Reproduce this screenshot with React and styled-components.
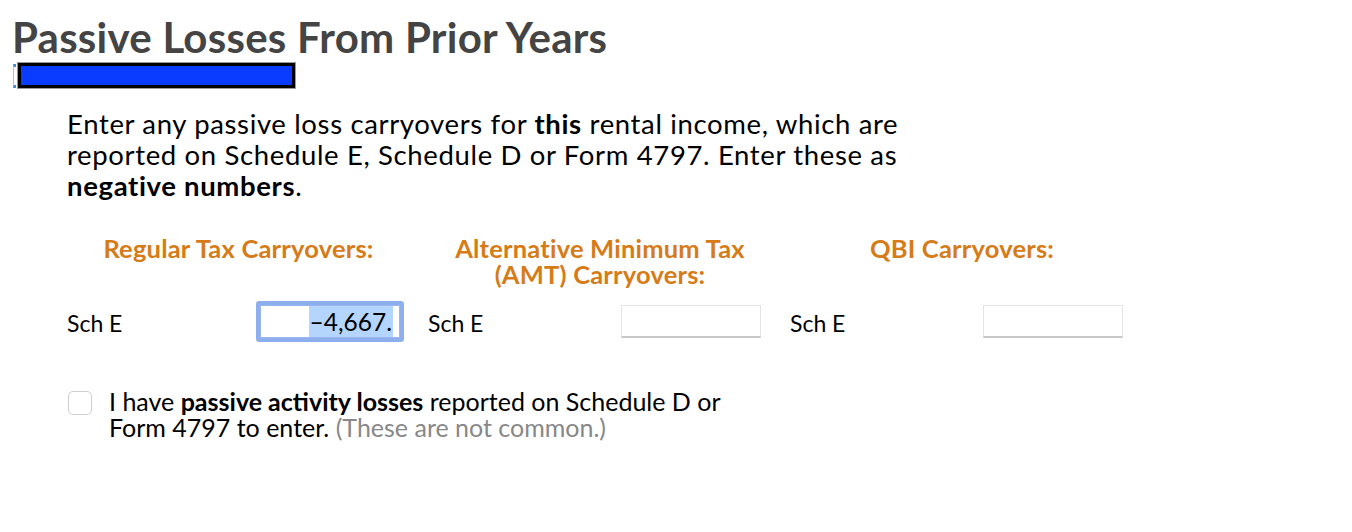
import React from 'react';
import styled, { createGlobalStyle } from 'styled-components';

const GlobalStyle = createGlobalStyle`
  body {
    margin: 0;
    background: #fff;
    font-family: Lato, "Liberation Sans", sans-serif;
    color: #000;
  }
`;

const Page = styled.div`
  padding: 15px 0 40px 12px;
`;

const Title = styled.h1`
  margin: 0;
  font-size: 42px;
  line-height: 44px;
  font-weight: 700;
  color: #444;
  letter-spacing: 0.25px;
`;

const Masked = styled.div`
  display: flex;
  align-items: center;
  gap: 2px;
  margin-top: 4px;
  margin-left: 1px;
`;

const Caret = styled.span`
  width: 2px;
  height: 18px;
  border-left: 1px solid #9cc3ea;
  border-top: 3px solid #3d8fd8;
  border-bottom: 3px solid #3d8fd8;
`;

const Bar = styled.div`
  width: 271px;
  height: 19px;
  background: #0a3cff;
  border: 3px solid #000;
  box-shadow: 0 0 0 1px #999;
`;

const Body = styled.div`
  padding-left: 55px;
`;

const Intro = styled.p`
  margin: 20px 0 0;
  max-width: 860px;
  font-size: 27.5px;
  line-height: 31px;
  letter-spacing: 0.65px;
`;

const Columns = styled.div`
  display: grid;
  grid-template-columns: 361px 362px 362px;
  margin-top: 34px;
`;

const Heading = styled.div`
  padding-right: 18px;
  text-align: center;
  font-size: 25.5px;
  line-height: 26px;
  font-weight: 700;
  color: #d67b17;
  letter-spacing: 0.2px;
`;

const Entry = styled.div`
  display: flex;
  align-items: center;
  height: 46px;
  margin-top: 11px;
`;

const Label = styled.span`
  width: 193px;
  font-size: 23px;
  padding-top: 3px;
`;

const Field = styled.div`
  width: 140px;
  height: 33px;
  box-sizing: border-box;
  display: flex;
  align-items: center;
  justify-content: flex-end;
  padding-right: 6px;
  background: #fff;
  border: 1px solid #e4e4e4;
  border-bottom: 2px solid #c9c9c9;
  font-size: 24.5px;
  ${({ $focused }) =>
    $focused &&
    `
    border: 1px solid #9ab6ee;
    box-shadow: 0 0 0 4px #8dafef;
    border-radius: 1px;
  `}
`;

const Selected = styled.span`
  background: #b4d5fe;
  line-height: 31px;
  padding: 0 1px;
`;

const CheckRow = styled.label`
  display: flex;
  align-items: flex-start;
  gap: 17px;
  margin-top: 44px;
  font-size: 25px;
  line-height: 26px;
`;

const Box = styled.span`
  flex: none;
  width: 24px;
  height: 24px;
  box-sizing: border-box;
  margin-top: 3px;
  margin-left: 1px;
  border: 1px solid #cfcfcf;
  border-radius: 5px;
  background: #fff;
`;

const CheckText = styled.span`
  max-width: 640px;
`;

const Muted = styled.span`
  color: #888;
`;

const columns = [
  { heading: ['Regular Tax Carryovers:'], value: '-4,667.', focused: true },
  { heading: ['Alternative Minimum Tax', '(AMT) Carryovers:'], value: '' },
  { heading: ['QBI Carryovers:'], value: '' },
];

export default function App() {
  return (
    <>
      <GlobalStyle />
      <Page>
        <Title>Passive Losses From Prior Years</Title>
        <Masked>
          <Caret />
          <Bar />
        </Masked>
        <Body>
          <Intro>
            Enter any passive loss carryovers for <b>this</b> rental income, which are
            reported on Schedule E, Schedule D or Form 4797. Enter these as{' '}
            <b>negative numbers</b>.
          </Intro>
          <Columns>
            {columns.map((c) => (
              <Heading key={c.heading[0]}>
                {c.heading.map((line) => (
                  <div key={line}>{line}</div>
                ))}
              </Heading>
            ))}
            {columns.map((c) => (
              <Entry key={c.heading[0] + '-row'}>
                <Label>Sch E</Label>
                <Field $focused={c.focused}>
                  {c.value && <Selected>{c.value.replace('-', '\u2013')}</Selected>}
                </Field>
              </Entry>
            ))}
          </Columns>
          <CheckRow>
            <Box />
            <CheckText>
              I have <b>passive activity losses</b> reported on Schedule D or Form 4797 to
              enter. <Muted>(These are not common.)</Muted>
            </CheckText>
          </CheckRow>
        </Body>
      </Page>
    </>
  );
}
